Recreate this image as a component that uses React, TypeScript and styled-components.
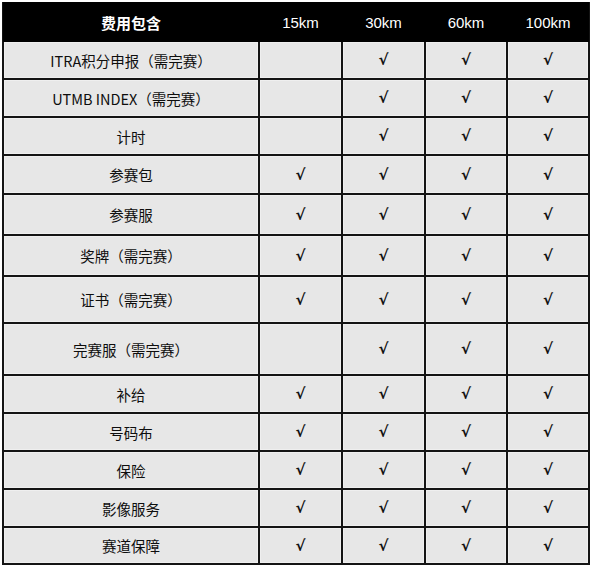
import React from "react";
import styled, { createGlobalStyle } from "styled-components";

// global
const GlobalStyle = createGlobalStyle`
  body {
    margin: 0;
    background: #ffffff;
    font-family: "Liberation Sans", "Noto Sans CJK SC", sans-serif;
  }
`;

// styled components
const Page = styled.div`
  padding: 2px 0 0 2px;
`;

const Grid = styled.div`
  display: grid;
  width: 588px;
  box-sizing: border-box;
  grid-template-columns: 254px 81px 81px 80px 80px;
  grid-template-rows: 36px 36px 36px 36px 37px 39px 39px 45px 50px 36px 36px 36px 36px 35px;
  gap: 2px;
  padding: 2px;
  background-color: #141414;
`;

const HeadCell = styled.div<{ $label?: boolean }>`
  display: flex;
  align-items: center;
  justify-content: center;
  background-color: #000000;
  color: #ffffff;
  font-family: ${(p) =>
    p.$label ? '"Noto Sans CJK SC", sans-serif' : '"Liberation Sans", Arial, sans-serif'};
  font-size: 15px;
  font-weight: ${(p) => (p.$label ? 700 : 400)};
  margin: -2px -1px;
`;

const Cell = styled.div`
  display: flex;
  align-items: center;
  justify-content: center;
  background-color: #e7e7e7;
  box-shadow: inset 0 0 0 1px #efefef;
  color: #1c1c1c;
`;

const Label = styled(Cell)`
  font-family: "Noto Sans CJK SC", sans-serif;
  font-size: 14.5px;
  font-weight: 400;
  color: #0e0e0e;
`;

const Check = styled(Cell)`
  font-family: "DejaVu Sans", sans-serif;
  font-size: 15px;
  font-weight: 700;
  color: #111111;
`;

// data
const distances = ["15km", "30km", "60km", "100km"];

type Row = { name: string; marks: boolean[] };

const rows: Row[] = [
  { name: "ITRA积分申报（需完赛）", marks: [false, true, true, true] },
  { name: "UTMB INDEX（需完赛）", marks: [false, true, true, true] },
  { name: "计时", marks: [false, true, true, true] },
  { name: "参赛包", marks: [true, true, true, true] },
  { name: "参赛服", marks: [true, true, true, true] },
  { name: "奖牌（需完赛）", marks: [true, true, true, true] },
  { name: "证书（需完赛）", marks: [true, true, true, true] },
  { name: "完赛服（需完赛）", marks: [false, true, true, true] },
  { name: "补给", marks: [true, true, true, true] },
  { name: "号码布", marks: [true, true, true, true] },
  { name: "保险", marks: [true, true, true, true] },
  { name: "影像服务", marks: [true, true, true, true] },
  { name: "赛道保障", marks: [true, true, true, true] },
];

// main component
const App: React.FC = () => {
  return (
    <Page>
      <GlobalStyle />
      <Grid>
        <HeadCell $label>费用包含</HeadCell>
        {distances.map((d) => (
          <HeadCell key={d}>{d}</HeadCell>
        ))}
        {rows.map((row) => (
          <React.Fragment key={row.name}>
            <Label>{row.name}</Label>
            {row.marks.map((m, i) => (
              <Check key={i}>{m ? "√" : ""}</Check>
            ))}
          </React.Fragment>
        ))}
      </Grid>
    </Page>
  );
};

export default App;
